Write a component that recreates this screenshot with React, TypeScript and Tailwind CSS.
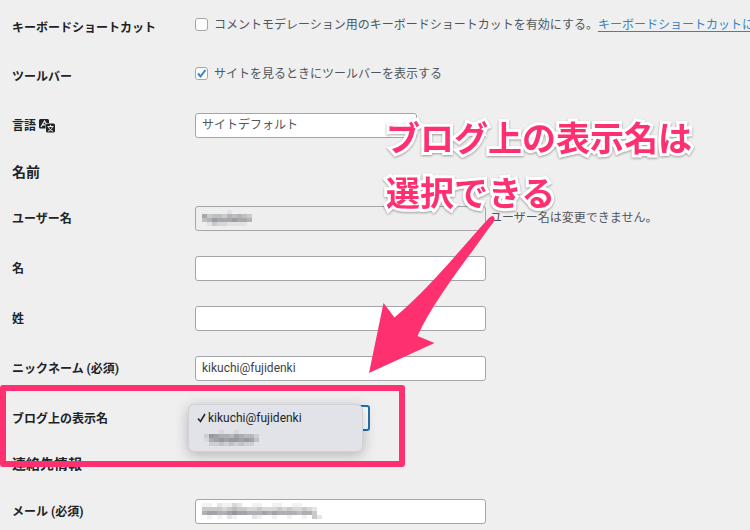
import React from "react";

// Darkness per cell, 0 (clear) to 9.
const USER_CELLS = ["0000010000", "6344354543", "4576667665", "0132211110"];
const OPTION_CELLS = ["00010010000", "27655465442", "15676776763", "02232323220"];
const EMAIL_CELLS = [
  "110211320011001100110000",
  "444434544334333434334320",
  "677667877666767666656640",
  "010102100021001001001042",
];

const FIELD =
  "h-[25px] w-full max-w-[291px] rounded-[3px] border border-[#a4a6aa] bg-white px-[6px] text-xs text-[#3c434a]";

// Pixelated stand-in for a value that must not be readable.
const Redacted: React.FC<{ cells: string[]; className?: string }> = ({ cells, className }) => (
  <svg className={className} width={cells[0].length * 5} height={cells.length * 4} aria-hidden="true">
    {cells.map((line, row) =>
      line.split("").map((level, col) => (
        <rect
          key={`${row}-${col}`}
          x={col * 5}
          y={row * 4}
          width={5}
          height={4}
          fill="#6b6e73"
          opacity={Number(level) / 11}
        />
      ))
    )}
  </svg>
);

const TranslateIcon: React.FC = () => (
  <svg width="17" height="14" viewBox="0 0 17 14" aria-hidden="true">
    <path d="M1.500 0h7a1.500 1.500 0 0 1 1.500 1.500V4H6.500v5.500H1.500A1.500 1.500 0 0 1 0 8V1.500A1.500 1.500 0 0 1 1.500 0z" fill="#1d2327" />
    <path d="M2 8 5.500 2l1.500 2.500M3.500 5.800H6" fill="none" stroke="#efefef" strokeWidth="1.200" />
    <rect x="7" y="4.500" width="9" height="9" rx="1.500" fill="#1d2327" />
    <path d="M8.500 7.500h6M11.500 5.800v1.700M13.500 7.500c-.5 2.500-2 4-4.500 4.700M9.500 7.500c.5 2.500 2 4 4.500 4.700" fill="none" stroke="#efefef" />
  </svg>
);

interface RowProps {
  label: React.ReactNode;
  htmlFor: string;
  className?: string;
  labelClass?: string;
  children: React.ReactNode;
}

const Row: React.FC<RowProps> = ({ label, htmlFor, className = "h-[50px]", labelClass = "pt-[2px]", children }) => (
  <div className={`grid grid-cols-[183px_minmax(0,1fr)] items-center ${className}`}>
    <label htmlFor={htmlFor} className={`flex items-center gap-[3px] text-xs font-bold text-[#1d2327] ${labelClass}`}>
      {label}
    </label>
    <div className="flex items-center whitespace-nowrap">{children}</div>
  </div>
);

const Check: React.FC<{ id: string; checked?: boolean; children: React.ReactNode }> = ({ id, checked, children }) => (
  <label className="flex items-center gap-[6px]">
    <span className="relative flex">
      <input
        id={id}
        type="checkbox"
        defaultChecked={checked}
        className="peer h-[13px] w-[13px] appearance-none rounded-[3px] border border-[#a4a6aa] bg-white"
      />
      <svg className="pointer-events-none absolute inset-0 hidden peer-checked:block" viewBox="0 0 13 13">
        <path d="M3 6.500 5.500 9.500 10.500 3" fill="none" stroke="#3582c4" strokeWidth="2" />
      </svg>
    </span>
    {children}
  </label>
);

const App: React.FC = () => (
  <main className="relative h-screen overflow-hidden bg-[#efefef] px-3 font-[Roboto,'Noto_Sans_CJK_JP',sans-serif] text-xs text-[#50575e]">
    <form>
      <Row label="キーボードショートカット" htmlFor="shortcuts" className="h-[49px]" labelClass="pt-[6px]">
        <Check id="shortcuts">コメントモデレーション用のキーボードショートカットを有効にする。</Check>
        <a href="#shortcuts" className="text-[#3582c4] underline underline-offset-2">
          キーボードショートカットについての詳細情報
        </a>
      </Row>
      <Row label="ツールバー" htmlFor="toolbar" className="h-[49px]" labelClass="pt-[6px]">
        <Check id="toolbar" checked>サイトを見るときにツールバーを表示する</Check>
      </Row>
      <Row label={<>言語 <TranslateIcon /></>} htmlFor="locale" className="h-[54px]">
        <select id="locale" className="h-[25px] w-full max-w-[222px] appearance-none rounded-[3px] border border-[#a4a6aa] bg-white px-[6px]">
          <option>サイトデフォルト</option>
        </select>
      </Row>

      <h2 className="flex h-[41px] items-center pb-[2px] text-sm font-bold text-[#1d2327]">名前</h2>

      <Row label="ユーザー名" htmlFor="user">
        <div className="relative flex w-full max-w-[291px] items-center">
          <input id="user" disabled className="h-[25px] w-full rounded-[3px] border border-[#a4a6aa] bg-[#eeeeee]" />
          <Redacted cells={USER_CELLS} className="absolute left-[7px]" />
        </div>
        <span className="ml-1">ユーザー名は変更できません。</span>
      </Row>
      <Row label="名" htmlFor="first">
        <input id="first" className={FIELD} />
      </Row>
      <Row label="姓" htmlFor="last">
        <input id="last" className={FIELD} />
      </Row>
      <Row label="ニックネーム (必須)" htmlFor="nickname">
        <input id="nickname" defaultValue="kikuchi@fujidenki" className={FIELD} />
      </Row>
      <Row label="ブログ上の表示名" htmlFor="display">
        <div className="relative w-[175px]">
          <select id="display" className="block h-[26px] w-full appearance-none rounded-[3px] border-2 border-[#2271b1] bg-white px-2">
            <option>kikuchi@fujidenki</option>
          </select>
          <div role="listbox" className="absolute -left-[7px] -top-px flex h-[48px] w-[175px] flex-col justify-center rounded-md border border-[#cfd1d6] bg-[#e1e3e8] px-2 text-[#1d2327] shadow-[0_3px_14px_rgba(0,0,0,0.25)]">
            <div role="option" aria-selected="true" className="flex h-5 items-center gap-[2px]">
              <svg width="9" height="10" viewBox="0 0 9 10" aria-hidden="true">
                <path d="M1 5.500 3.500 8.500 8 1" fill="none" stroke="#1d2327" strokeWidth="1.500" />
              </svg>
              kikuchi@fujidenki
            </div>
            <div role="option" aria-selected="false" className="flex h-5 items-center pl-[7px]">
              <Redacted cells={OPTION_CELLS} />
            </div>
          </div>
        </div>
      </Row>

      <h2 className="flex h-[43px] items-center pb-[2px] text-sm font-bold text-[#1d2327]">連絡先情報</h2>

      <Row label="メール (必須)" htmlFor="email">
        <div className="relative flex w-full max-w-[291px] items-center">
          <input id="email" type="email" className={FIELD} />
          <Redacted cells={EMAIL_CELLS} className="absolute left-[7px]" />
        </div>
      </Row>
    </form>

    <div className="pointer-events-none absolute left-0 top-[385px] h-[82px] w-[405px] rounded-[3px] border-[6px] border-[#ff306f]" />
    <svg className="pointer-events-none absolute left-[360px] top-[210px]" width="140" height="170" viewBox="360 210 140 170" aria-hidden="true">
      <path
        d="M369 373 383.500 303 394.500 317.500C430 288 462 247 489 218Q493 214 494.500 218C495 221 492 224 489 228C465 262 434 300 417.500 336L434.500 343Z"
        fill="#ff306f"
      />
    </svg>
    <p className="pointer-events-none absolute left-[386px] top-[109px] whitespace-nowrap font-['Noto_Sans_CJK_JP',sans-serif] text-[34px] font-bold leading-[55px] text-[#ff306f] [-webkit-text-stroke:6px_white] [paint-order:stroke] drop-shadow-[0_1px_1px_rgba(0,0,0,0.35)]">
      ブログ上の表示名は
      <br />
      選択できる
    </p>
  </main>
);

export default App;
